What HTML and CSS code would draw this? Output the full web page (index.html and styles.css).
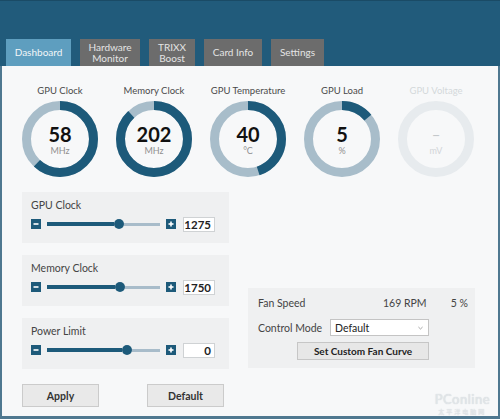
FILE: index.html
```html
<!DOCTYPE html>
<html>
<head>
<meta charset="utf-8">
<link rel="stylesheet" href="styles.css">
</head>
<body>
<div class="window">
  <div class="header">
    <div class="tabs">
      <div class="tab tab-active tab-dash">Dashboard</div>
      <div class="tab tab-hw">Hardware<br>Monitor</div>
      <div class="tab tab-trixx">TRIXX<br>Boost</div>
      <div class="tab tab-card">Card Info</div>
      <div class="tab tab-set">Settings</div>
    </div>
  </div>
  <div class="content">
    <div class="gauges">
      <div class="gauge-col">
        <div class="gauge-label">GPU Clock</div>
        <div class="gauge">
          <svg class="ring" viewBox="0 0 76 76" width="76" height="76">
            <circle class="ring-bg" cx="38" cy="38" r="33.5"/>
            <circle class="ring-fg" cx="38" cy="38" r="33.5" stroke-dasharray="130.5 210.5" transform="rotate(-90 38 38)"/>
          </svg>
          <div class="gauge-text"><div class="gauge-value">58</div><div class="gauge-unit">MHz</div></div>
        </div>
      </div>
      <div class="gauge-col">
        <div class="gauge-label">Memory Clock</div>
        <div class="gauge">
          <svg class="ring" viewBox="0 0 76 76" width="76" height="76">
            <circle class="ring-bg" cx="38" cy="38" r="33.5"/>
            <circle class="ring-fg" cx="38" cy="38" r="33.5" stroke-dasharray="185.2 210.5" transform="rotate(-90 38 38)"/>
          </svg>
          <div class="gauge-text"><div class="gauge-value">202</div><div class="gauge-unit">MHz</div></div>
        </div>
      </div>
      <div class="gauge-col">
        <div class="gauge-label">GPU Temperature</div>
        <div class="gauge">
          <svg class="ring" viewBox="0 0 76 76" width="76" height="76">
            <circle class="ring-bg" cx="38" cy="38" r="33.5"/>
            <circle class="ring-fg" cx="38" cy="38" r="33.5" stroke-dasharray="94.7 210.5" transform="rotate(-90 38 38)"/>
          </svg>
          <div class="gauge-text"><div class="gauge-value">40</div><div class="gauge-unit">°C</div></div>
        </div>
      </div>
      <div class="gauge-col">
        <div class="gauge-label">GPU Load</div>
        <div class="gauge">
          <svg class="ring" viewBox="0 0 76 76" width="76" height="76">
            <circle class="ring-bg" cx="38" cy="38" r="33.5"/>
            <circle class="ring-fg" cx="38" cy="38" r="33.5" stroke-dasharray="29.5 210.5" transform="rotate(-90 38 38)"/>
          </svg>
          <div class="gauge-text"><div class="gauge-value">5</div><div class="gauge-unit">%</div></div>
        </div>
      </div>
      <div class="gauge-col gauge-disabled">
        <div class="gauge-label">GPU Voltage</div>
        <div class="gauge">
          <svg class="ring" viewBox="0 0 76 76" width="76" height="76">
            <circle class="ring-off" cx="38" cy="38" r="33.5"/>
          </svg>
          <div class="gauge-text"><div class="gauge-value">–</div><div class="gauge-unit">mV</div></div>
        </div>
      </div>
    </div>

    <div class="lower">
      <div class="left-col">
        <div class="panel">
          <div class="panel-label">GPU Clock</div>
          <div class="slider-row">
            <span class="step-btn"><svg viewBox="0 0 10 10" width="10" height="10"><rect width="10" height="10" fill="#1d5a7a"/><rect x="2.5" y="4.2" width="5" height="1.6" fill="#fff"/></svg></span>
            <div class="track"><div class="fill" style="width:67px"></div><div class="thumb"></div><div class="rest"></div></div>
            <span class="step-btn"><svg viewBox="0 0 10 10" width="10" height="10"><rect width="10" height="10" fill="#1d5a7a"/><rect x="2.5" y="4.2" width="5" height="1.6" fill="#fff"/><rect x="4.2" y="2.5" width="1.6" height="5" fill="#fff"/></svg></span>
            <div class="num-box">1275</div>
          </div>
        </div>
        <div class="panel">
          <div class="panel-label">Memory Clock</div>
          <div class="slider-row">
            <span class="step-btn"><svg viewBox="0 0 10 10" width="10" height="10"><rect width="10" height="10" fill="#1d5a7a"/><rect x="2.5" y="4.2" width="5" height="1.6" fill="#fff"/></svg></span>
            <div class="track"><div class="fill" style="width:68px"></div><div class="thumb"></div><div class="rest"></div></div>
            <span class="step-btn"><svg viewBox="0 0 10 10" width="10" height="10"><rect width="10" height="10" fill="#1d5a7a"/><rect x="2.5" y="4.2" width="5" height="1.6" fill="#fff"/><rect x="4.2" y="2.5" width="1.6" height="5" fill="#fff"/></svg></span>
            <div class="num-box">1750</div>
          </div>
        </div>
        <div class="panel">
          <div class="panel-label">Power Limit</div>
          <div class="slider-row">
            <span class="step-btn"><svg viewBox="0 0 10 10" width="10" height="10"><rect width="10" height="10" fill="#1d5a7a"/><rect x="2.5" y="4.2" width="5" height="1.6" fill="#fff"/></svg></span>
            <div class="track"><div class="fill" style="width:75px"></div><div class="thumb"></div><div class="rest"></div></div>
            <span class="step-btn"><svg viewBox="0 0 10 10" width="10" height="10"><rect width="10" height="10" fill="#1d5a7a"/><rect x="2.5" y="4.2" width="5" height="1.6" fill="#fff"/><rect x="4.2" y="2.5" width="1.6" height="5" fill="#fff"/></svg></span>
            <div class="num-box">0</div>
          </div>
        </div>
        <div class="btn-row">
          <div class="btn">Apply</div>
          <div class="btn">Default</div>
        </div>
      </div>

      <div class="right-col">
        <div class="fan-panel">
          <div class="fan-row">
            <span>Fan Speed</span>
            <span class="fan-rpm">169 RPM</span>
            <span class="fan-pct">5 %</span>
          </div>
          <div class="mode-row">
            <span class="mode-label">Control Mode</span>
            <div class="select"><span>Default</span><svg class="caret" viewBox="0 0 6 4" width="5" height="4"><path d="M0.5 0.8 L3 3.2 L5.5 0.8" fill="none" stroke="#888" stroke-width="0.9"/></svg></div>
          </div>
          <div class="curve-btn">Set Custom Fan Curve</div>
        </div>
      </div>
    </div>

    <div class="watermark">
      <div class="wm-main">PConline</div>
      <div class="wm-sub">太平洋电脑网</div>
    </div>
  </div>
</div>
</body>
</html>
```

FILE: styles.css
```css
* { box-sizing: border-box; }
html, body {
  margin: 0;
  padding: 0;
}
body {
  width: 500px;
  height: 419px;
  overflow: hidden;
  font-family: Lato, "Open Sans", sans-serif;
  background: #215b7b;
}
.window {
  width: 500px;
  height: 419px;
  display: flex;
  flex-direction: column;
  background: #215b7b;
}
.header {
  height: 66px;
  flex: none;
  padding-top: 39px;
  border-top: 1px solid #1a4b66;
}
.tabs {
  display: flex;
  gap: 9px;
  padding-left: 6px;
  margin-top: -1px;
}
.tab {
  height: 27px;
  display: flex;
  align-items: center;
  justify-content: center;
  text-align: center;
  font-size: 10px;
  line-height: 10.5px;
  color: #e4e4e4;
  background: #6c6c6c;
}
.tab-active { background: #5e9ebf; color: #f2f6f8; }
.tab-dash { width: 65px; }
.tab-hw { width: 60px; }
.tab-trixx { width: 46px; }
.tab-card { width: 58px; }
.tab-set { width: 53px; }

.content {
  flex: 1;
  position: relative;
  background: #f7f8f9;
  border: 2px solid #4f7890;
  border-top: none;
  border-bottom-width: 3px;
  padding-top: 19px;
}

.gauges {
  display: grid;
  grid-template-columns: repeat(5, 94px);
  padding-left: 11px;
}
.gauge-col {
  display: flex;
  flex-direction: column;
  align-items: center;
  gap: 4px;
}
.gauge-label {
  font-size: 9.5px;
  line-height: 12px;
  color: #4a4a4a;
  white-space: nowrap;
}
.gauge {
  width: 76px;
  height: 76px;
  display: grid;
}
.ring, .gauge-text { grid-area: 1 / 1; }
.ring-bg { fill: none; stroke: #a8bdca; stroke-width: 9; }
.ring-fg { fill: none; stroke: #1d5a7a; stroke-width: 9; }
.ring-off { fill: none; stroke: #e7ebee; stroke-width: 9; }
.gauge-text {
  display: flex;
  flex-direction: column;
  align-items: center;
  justify-content: center;
  padding-top: 1px;
}
.gauge-value {
  font-size: 20px;
  line-height: 22px;
  font-weight: 700;
  color: #111;
}
.gauge-unit {
  font-size: 9px;
  line-height: 11px;
  color: #8f8f8f;
}
.gauge-disabled .gauge-label { color: #d4d8db; }
.gauge-disabled .gauge-value { color: #c4c8cb; font-weight: 400; font-size: 15px; }
.gauge-disabled .gauge-unit { color: #d2d5d8; }

.lower {
  display: grid;
  grid-template-columns: 207px 227px;
  column-gap: 19px;
  padding-left: 20px;
  margin-top: 15px;
}
.left-col {
  display: flex;
  flex-direction: column;
  gap: 12px;
}
.panel {
  height: 51px;
  background: #eff0f1;
  padding: 7px 9px 0 9px;
}
.panel-label {
  font-size: 10.5px;
  line-height: 12px;
  color: #444;
}
.slider-row {
  display: flex;
  align-items: center;
  height: 16px;
  margin-top: 5px;
}
.step-btn {
  width: 10px;
  height: 10px;
  display: block;
  flex: none;
}
.step-btn svg { display: block; }
.track {
  width: 113px;
  height: 10px;
  margin: 0 6px;
  display: flex;
  align-items: center;
  flex: none;
}
.fill { height: 4px; background: #1d5a7a; flex: none; }
.thumb {
  width: 10px;
  height: 10px;
  border-radius: 50%;
  background: #1d5a7a;
  flex: none;
}
.rest { flex: 1; height: 3px; background: #a8bcca; }
.num-box {
  width: 32px;
  height: 15px;
  margin-left: 7px;
  background: #fff;
  border: 1px solid #cfd2d4;
  font-size: 11.5px;
  line-height: 13px;
  font-weight: 700;
  color: #222;
  text-align: right;
  padding-right: 3px;
  flex: none;
}
.btn-row {
  display: flex;
  justify-content: space-between;
  width: 202px;
  margin-top: 3px;
}
.btn {
  width: 77px;
  height: 23px;
  background: #e9e9e9;
  border: 1px solid #cbcbcb;
  font-size: 10.5px;
  font-weight: 700;
  color: #333;
  display: flex;
  align-items: center;
  justify-content: center;
}

.right-col { padding-top: 96px; }
.fan-panel {
  height: 80px;
  background: #eff0f1;
  padding: 8px 7px 0 10px;
}
.fan-row {
  display: grid;
  grid-template-columns: 125px 45px 1fr;
  font-size: 10.5px;
  line-height: 14px;
  color: #444;
  white-space: nowrap;
}
.fan-pct { text-align: right; }
.mode-row {
  display: flex;
  align-items: center;
  margin-top: 9px;
  height: 17px;
}
.mode-label {
  width: 72px;
  font-size: 10.5px;
  color: #444;
  white-space: nowrap;
}
.select {
  width: 99px;
  height: 17px;
  background: #fff;
  border: 1px solid #c4c4c4;
  display: flex;
  align-items: center;
  justify-content: space-between;
  padding: 0 5px 0 4px;
  font-size: 10.5px;
  color: #222;
}
.caret { display: block; }
.curve-btn {
  width: 132px;
  height: 18px;
  margin-top: 6px;
  margin-left: 39px;
  background: #e7e7e7;
  border: 1px solid #c6c6c6;
  font-size: 10px;
  font-weight: 700;
  color: #222;
  display: flex;
  align-items: center;
  justify-content: center;
}

.watermark {
  position: absolute;
  right: 8px;
  bottom: 0;
  display: flex;
  flex-direction: column;
  align-items: center;
  color: #e2e6e9;
  text-shadow: 0 0 1px #c9cfd4;
}
.wm-main { font-size: 13px; line-height: normal; letter-spacing: 0.5px; }
.wm-sub { font-family: "Noto Sans CJK SC", sans-serif; font-size: 6px; line-height: normal; letter-spacing: 2px; }
```
